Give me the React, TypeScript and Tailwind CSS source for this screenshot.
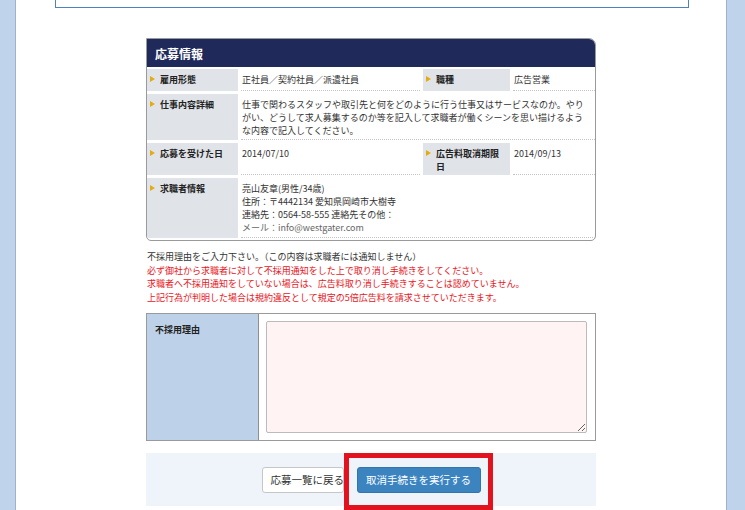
import type { ReactNode } from 'react';

const Label = ({ children }: { children: ReactNode }) => (
    <div className="flex bg-[#e0e3e8] pl-[3px] pr-[6px] pt-[4px] pb-[2px] font-bold text-[#222]">
        <span className="mt-[3px] h-0 w-0 shrink-0 border-y-[3.5px] border-l-[5px] border-y-transparent border-l-[#e5ac12]" />
        <span className="ml-[5px]">{children}</span>
    </div>
);

const Value = ({ children, className = '' }: { children: ReactNode; className?: string }) => (
    <div className={`border-b border-dotted border-[#c4c4c4] pl-[1px] pt-[4px] pb-[2px] text-[#333] ${className}`}>
        {children}
    </div>
);

export default function App() {
    return (
        <div className="min-h-[510px] bg-[#bfd3ea] font-['Noto_Sans_CJK_JP',sans-serif] text-[9px] leading-[13px]">
            <div className="ml-[15px] min-h-[510px] w-[712px] border-x border-[#9db3cd] bg-white">
                {/* 前ボックスの下端 */}
                <div className="ml-[39px] h-[8px] w-[634px] border-x border-b border-[#4f80bf]" />

                <div className="mx-auto mt-[30px] w-[450px]">
                    {/* 応募情報カード */}
                    <div className="overflow-hidden rounded-tr-[7px] rounded-b-[5px] border border-[#9a9a9a] pb-[2px]">
                        <div className="flex h-[28px] items-center bg-[#1f2a5b] pl-[8px] text-[12px] font-bold text-white">
                            応募情報
                        </div>
                        <div className="mt-[2px] grid grid-cols-[91px_179px_87px_1fr] gap-[3px]">
                            <Label>雇用形態</Label>
                            <Value className="min-h-[22px]">正社員／契約社員／派遣社員</Value>
                            <Label>職種</Label>
                            <Value>広告営業</Value>

                            <Label>仕事内容詳細</Label>
                            <Value className="col-span-3 pr-[6px]">
                                仕事で関わるスタッフや取引先と何をどのように行う仕事又はサービスなのか。やりがい、どうして求人募集するのか等を記入して求職者が働くシーンを思い描けるような内容で記入してください。
                            </Value>

                            <Label>応募を受けた日</Label>
                            <Value>2014/07/10</Value>
                            <Label>広告料取消期限日</Label>
                            <Value>2014/09/13</Value>

                            <Label>求職者情報</Label>
                            <Value className="col-span-3 pb-[3px]">
                                <div>亮山友章(男性/34歳)</div>
                                <div>住所：〒4442134 愛知県岡崎市大樹寺</div>
                                <div>連絡先：0564-58-555 連絡先その他：</div>
                                <div className="text-[#666]">メール：info@westgater.com</div>
                            </Value>
                        </div>
                    </div>

                    {/* 注意書き */}
                    <div className="mt-[9px] pl-[1px] leading-[13.5px]">
                        <p className="text-[#333]">不採用理由をご入力下さい。（この内容は求職者には通知しません）</p>
                        <p className="text-[#e8141c]">必ず御社から求職者に対して不採用通知をした上で取り消し手続きをしてください。</p>
                        <p className="text-[#e8141c]">求職者へ不採用通知をしていない場合は、広告料取り消し手続きすることは認めていません。</p>
                        <p className="text-[#e8141c]">上記行為が判明した場合は規約違反として規定の5倍広告料を請求させていただきます。</p>
                    </div>

                    {/* 不採用理由フォーム */}
                    <div className="mt-[9px] flex h-[128px] border border-[#9a9a9a]">
                        <div className="w-[112px] shrink-0 border-r border-[#8f8f8f] bg-[#bdd1e8] pl-[8px] pt-[9px] font-bold text-[#222]">
                            不採用理由
                        </div>
                        <div className="flex-1 p-[7px] pr-[8px]">
                            <textarea className="h-full w-full rounded-[2px] border border-[#bbb] bg-[#fff4f3]" />
                        </div>
                    </div>

                    {/* ボタン */}
                    <div className="relative mt-[12px] flex h-[53px] items-center justify-center gap-[13px] bg-[#eff4fa]">
                        <button className="h-[26px] w-[82px] overflow-hidden whitespace-nowrap rounded-[3px] border border-[#c6c6c6] bg-white pl-[8px] text-left text-[10.5px] text-[#333]">
                            応募一覧に戻る
                        </button>
                        <button className="h-[26px] w-[124px] rounded-[3px] border border-[#3374ad] bg-[#3b84c0] text-[10.5px] text-white">
                            取消手続きを実行する
                        </button>
                        <div className="absolute left-[198px] top-0 h-[57px] w-[149px] border-[5px] border-[#e3121f]" />
                    </div>
                </div>
            </div>
        </div>
    );
}
